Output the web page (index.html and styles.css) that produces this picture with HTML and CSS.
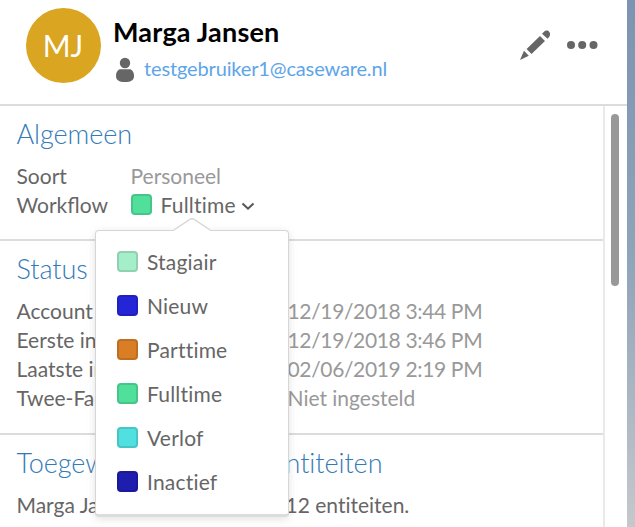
FILE: index.html
```html
<!DOCTYPE html>
<html lang="nl">
<head>
<meta charset="utf-8">
<title>Marga Jansen</title>
<link rel="stylesheet" href="styles.css">
</head>
<body>
<div class="panel">
  <header class="header">
    <div class="avatar">MJ</div>
    <div class="identity">
      <h1 class="name">Marga Jansen</h1>
      <div class="contact">
        <svg class="person" width="20" height="26" viewBox="0 0 20 26"><circle cx="10" cy="6" r="5.2"/><path d="M4.500 12.300H15.500C18 13.500 19 16 19 19C19 23 16 25 10 25S1 23 1 19C1 16 2 13.500 4.500 12.300Z"/></svg>
        <a class="email">testgebruiker1@caseware.nl</a>
      </div>
    </div>
    <div class="actions">
      <svg class="pencil" width="32" height="32" viewBox="0 0 32 32"><path d="M1 31L5 21.800L9.800 26.800ZM7.600 20L21 7L26 12L12.500 25ZM23 4.800L25 2.800Q26.500 1 28.500 1.500Q31.500 3 31 6Q30.800 7.500 28.600 9.800Z"/></svg>
      <svg class="dots" width="32" height="10" viewBox="0 0 32 10"><circle cx="5" cy="5" r="4"/><circle cx="16.200" cy="5" r="4"/><circle cx="27.500" cy="5" r="4"/></svg>
    </div>
  </header>
  <div class="body">
    <main class="content">
      <section class="section general">
        <h2 class="title">Algemeen</h2>
        <dl class="rows">
          <dt>Soort</dt><dd>Personeel</dd>
          <dt class="joined">Workflow</dt>
          <dd class="picker">
            <i class="swatch fulltime"></i><span class="current">Fulltime</span>
            <svg class="chevron" width="14" height="9" viewBox="0 0 14 9"><path d="M1.500 1.500L7 6.700L12.500 1.500"/></svg>
            <div class="menu">
              <svg class="arrow" width="38" height="15" viewBox="0 0 38 15"><path class="arrow-fill" d="M1 15V13L19 1.500L37 13V15Z"/><path class="arrow-line" d="M1 13L16.500 2.500Q19 .8 21.500 2.500L37 13"/></svg>
              <div class="option"><i class="swatch stagiair"></i>Stagiair</div>
              <div class="option"><i class="swatch nieuw"></i>Nieuw</div>
              <div class="option"><i class="swatch parttime"></i>Parttime</div>
              <div class="option"><i class="swatch fulltime"></i>Fulltime</div>
              <div class="option"><i class="swatch verlof"></i>Verlof</div>
              <div class="option"><i class="swatch inactief"></i>Inactief</div>
            </div>
          </dd>
        </dl>
      </section>
      <section class="section status">
        <h2 class="title">Status</h2>
        <dl class="rows">
          <dt>Account</dt><dd class="date">12/19/2018 3:44 PM</dd>
          <dt>Eerste inlog</dt><dd class="date">12/19/2018 3:46 PM</dd>
          <dt>Laatste inlog</dt><dd class="date">02/06/2019 2:19 PM</dd>
          <dt>Twee-Factor</dt><dd>Niet ingesteld</dd>
        </dl>
      </section>
      <section class="section entities">
        <h2 class="title"><span class="lead">Toegewezen aan</span>entiteiten</h2>
        <p class="text"><span class="lead">Marga Jansen is betrokken bij</span>12 entiteiten.</p>
      </section>
    </main>
    <div class="scroll"><div class="thumb"></div></div>
  </div>
</div>
</body>
</html>
```

FILE: styles.css
```css
* { box-sizing: border-box; }
body {
  margin: 0;
  height: 527px;
  overflow: hidden;
  background: linear-gradient(#7b94b1, #8fa5b9 50%, #c5c8cc);
  font: 21px/29px Lato, "Liberation Sans", sans-serif;
  font-variant-ligatures: none;
  color: #666;
}
h1, h2, dl, dd, p { margin: 0; }
svg { display: block; fill: #666; }
.panel {
  width: 627px;
  height: 527px;
  background: #fff;
  display: flex;
  flex-direction: column;
}
.header {
  height: 106px;
  flex: none;
  border-bottom: 2px solid #dcdcdc;
  padding: 8px 29px 0 26px;
  display: flex;
  align-items: flex-start;
}
.avatar {
  width: 75px;
  height: 75px;
  border-radius: 50%;
  background: #daa520;
  color: #fff;
  font-size: 30px;
  line-height: 75px;
  text-align: center;
  text-indent: -1px;
}
.identity { margin-left: 12px; padding-top: 7px; }
.name { font-size: 27px; line-height: 33px; font-weight: 700; letter-spacing: .2px; color: #000; }
.contact { display: flex; align-items: flex-start; gap: 9px; margin-left: 2px; margin-top: 9px; }
.email { font-size: 20px; line-height: 26px; margin-top: -2px; letter-spacing: -.14px; color: #5ea5e8; }
.actions { margin: 21px 0 0 auto; display: flex; align-items: center; gap: 15px; }
.body { flex: 1; min-height: 0; display: flex; }
.content { width: 603px; overflow: hidden; position: relative; }
.section { border-bottom: 2px solid #dcdcdc; padding: 11px 17px 0 16.5px; }
.general { height: 135px; }
.status { height: 194px; }
.entities { border-bottom: 0; }
.title { font-size: 27px; line-height: 33px; font-weight: 300; letter-spacing: -.05px; color: #337ab7; white-space: nowrap; }
.rows { display: grid; grid-auto-rows: 29px; margin-top: 11px; }
.general .rows { grid-template-columns: 114px 1fr; }
.status .rows { grid-template-columns: 271px 1fr; }
.joined { font-variant-ligatures: normal; }
dd { color: #999; }
.date { letter-spacing: -.35px; }
.picker { display: flex; align-items: center; position: relative; color: #666; letter-spacing: .2px; }
.swatch {
  width: 21px;
  height: 21px;
  flex: none;
  border-radius: 4px;
  border: 2px solid rgba(0, 0, 0, .12);
  margin-right: 9px;
}
.stagiair { background-color: #a5eeca; }
.nieuw { background-color: #2525d8; }
.parttime { background-color: #d97e25; }
.fulltime { background-color: #51e09b; }
.verlof { background-color: #51e0e0; }
.inactief { background-color: #1e1eae; }
.chevron { margin-left: 5px; margin-top: 3px; fill: none; stroke: #555; stroke-width: 2; }
.menu {
  position: absolute;
  z-index: 1;
  left: -35.500px;
  top: 40px;
  width: 194px;
  height: 287px;
  padding: 8px 21px;
  background: #fff;
  border: 1px solid #d6d6d6;
  border-bottom: 3px solid #dcdcdc;
  border-radius: 4px;
  box-shadow: 0 2px 8px rgba(0, 0, 0, .12);
}
.arrow { position: absolute; left: 77px; top: -14px; }
.arrow-fill { fill: #fff; }
.arrow-line { fill: none; stroke: #d6d6d6; stroke-width: 1.500; }
.option { height: 44px; display: flex; align-items: center; }
.lead { display: inline-block; width: 269px; white-space: nowrap; }
.title .lead { width: 255px; }
.text { margin-top: 11px; }
.scroll { flex: 1; border-left: 2px solid #e9e9e9; padding: 8px 0 0 6px; }
.thumb { width: 8px; height: 172px; border-radius: 4px; background: #999; }
```
